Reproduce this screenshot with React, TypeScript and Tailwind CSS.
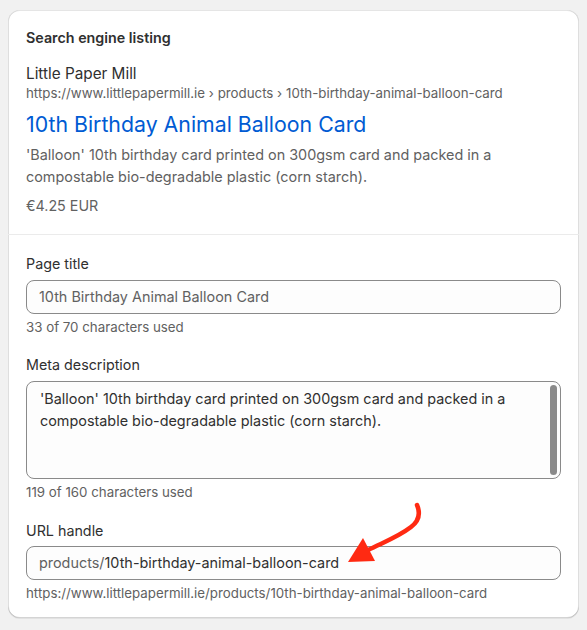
const font = { fontFamily: "Inter, 'Noto Sans', sans-serif" };

function Field({ label, children, help }: { label: string; children: React.ReactNode; help: string }) {
  return (
    <div>
      <p className="text-[14.3px] leading-5 text-[#303030]">{label}</p>
      {children}
      <p className="mt-[3px] text-[13.3px] leading-5 text-[#616161]">{help}</p>
    </div>
  );
}

export default function App() {
  return (
    <div className="min-h-screen bg-[#f1f1f1] pt-[10px] pl-[8px] pr-[8px] pb-[10px]" style={font}>
      <div className="relative w-[571px] rounded-[12px] bg-white shadow-[0_1px_0_0_rgba(26,26,26,0.07),0_1px_0_0_rgba(204,204,204,0.5)_inset,0_-1px_0_0_rgba(0,0,0,0.17)_inset,-1px_0_0_0_rgba(0,0,0,0.13)_inset,1px_0_0_0_rgba(0,0,0,0.13)_inset]">
        {/* preview */}
        <div className="px-[18px] pt-[18px] pb-[18px]">
          <h2 className="text-[14.3px] leading-5 font-semibold text-[#303030]">Search engine listing</h2>
          <p className="mt-4 text-[15.3px] leading-5 text-[#303030]">Little Paper Mill</p>
          <p className="text-[13.3px] leading-[18px] text-[#616161]">
            https://www.littlepapermill.ie › products › 10th-birthday-animal-balloon-card
          </p>
          <p className="mt-2 text-[21.3px] leading-7 text-[#005bd3]">10th Birthday Animal Balloon Card</p>
          <p className="mt-[6px] text-[14.4px] leading-[22px] text-[#616161]">
            'Balloon' 10th birthday card printed on 300gsm card and packed in a
            <br />
            compostable bio-degradable plastic (corn starch).
          </p>
          <p className="mt-2 text-[14.3px] leading-5 text-[#616161]">€4.25 EUR</p>
        </div>

        <div className="border-t border-[#ebebeb]" />

        {/* fields */}
        <div className="flex flex-col gap-[18px] px-[18px] pt-[19px] pb-[15px]">
          <Field label="Page title" help="33 of 70 characters used">
            <div className="mt-[6px] flex h-[34px] items-center rounded-[8px] border border-[#8a8a8a] bg-[#fdfdfd] px-[12px] text-[14.4px] text-[#616161]">
              10th Birthday Animal Balloon Card
            </div>
          </Field>

          <Field label="Meta description" help="119 of 160 characters used">
            <div className="relative mt-[6px] h-[98px] rounded-[8px] border border-[#8a8a8a] bg-[#fdfdfd] pl-[13px] pr-6 pt-[6px] text-[14.4px] leading-[22px] text-[#303030]">
              'Balloon' 10th birthday card printed on 300gsm card and packed in a
              <br />
              compostable bio-degradable plastic (corn starch).
              <div className="absolute right-[3px] top-[3px] h-[90px] w-[7px] rounded-full bg-[#8a8a8a]" />
            </div>
          </Field>

          <div className="pt-px">
            <Field label="URL handle" help="https://www.littlepapermill.ie/products/10th-birthday-animal-balloon-card">
              <div className="mt-[5px] flex h-[34px] items-center rounded-[8px] border border-[#8a8a8a] bg-[#fdfdfd] px-[12px] text-[14.4px]">
                <span className="text-[#616161]">products/</span>
                <span className="text-[#303030]">10th-birthday-animal-balloon-card</span>
              </div>
            </Field>
          </div>
        </div>

        {/* annotation arrow */}
        <svg className="absolute left-0 top-0 pointer-events-none" width="571" height="610" viewBox="0 0 571 610">
          <path
            d="M409 495 C412 502 412 510 403 517 C390 527 376 532 360 540"
            fill="none"
            stroke="#ff2a12"
            strokeWidth="4.5"
            strokeLinecap="round"
          />
          <polygon points="340,552 355,528 367,551" fill="#ff2a12" />
        </svg>
      </div>
    </div>
  );
}
